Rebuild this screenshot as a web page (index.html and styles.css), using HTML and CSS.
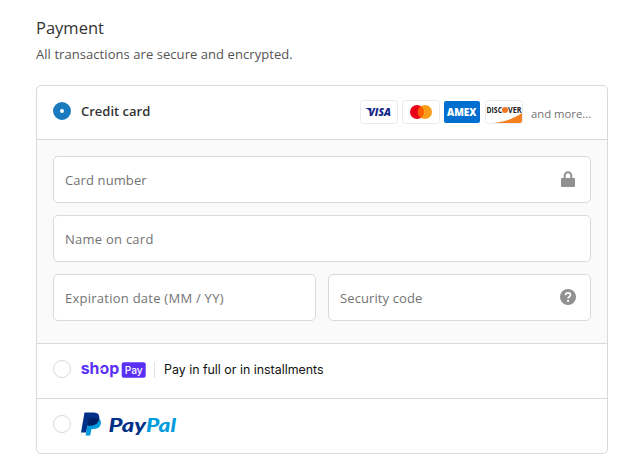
FILE: index.html
```html
<!DOCTYPE html>
<html lang="en">
<head>
<meta charset="utf-8">
<title>Payment</title>
<link rel="stylesheet" href="styles.css">
</head>
<body>
<main class="payment">
  <h2 class="title">Payment</h2>
  <p class="subtitle">All transactions are secure and encrypted.</p>
  <section class="methods">
    <div class="row row-card">
      <span class="radio radio-on"></span>
      <span class="label">Credit card</span>
      <div class="brands">
        <svg class="brand" viewBox="0 0 38 24"><rect x=".5" y=".5" width="37" height="23" rx="3" fill="#fff" stroke="#ebebeb"/><text x="8.500" y="16" textLength="22.500" lengthAdjust="spacingAndGlyphs" class="visa">VISA</text><path d="M5 8h4.600l1.900 5.500C10.300 11 8.400 9 5 8z" fill="#142688"/></svg>
        <svg class="brand" viewBox="0 0 38 24"><rect x=".5" y=".5" width="37" height="23" rx="3" fill="#fff" stroke="#ebebeb"/><circle cx="15" cy="12" r="7" fill="#eb001b"/><circle cx="23" cy="12" r="7" fill="#f79e1b"/><path d="M19 6.250a7 7 0 0 1 0 11.500 7 7 0 0 1 0-11.500z" fill="#ff5f00"/></svg>
        <svg class="brand" viewBox="0 0 38 24"><rect x="1" y="1" width="36" height="22" rx="2" fill="#006fcf"/><text x="4" y="15.700" textLength="29.500" lengthAdjust="spacingAndGlyphs" class="amex">AMEX</text></svg>
        <svg class="brand" viewBox="0 0 38 24"><rect x=".5" y=".5" width="37" height="23" rx="3" fill="#fff" stroke="#ebebeb"/><path d="M37 13v8a2 2 0 0 1-2 2H9c12-1.500 21-5 28-10z" fill="#f48120"/><text x="1.500" y="13" textLength="15.500" lengthAdjust="spacingAndGlyphs" class="discover">DISC</text><circle cx="20" cy="10" r="3" fill="#ee7623"/><text x="23" y="13" textLength="13.500" lengthAdjust="spacingAndGlyphs" class="discover">VER</text></svg>
      </div>
      <span class="more">and more...</span>
    </div>
    <div class="fields">
      <div class="field wide"><span class="ph">Card number</span>
        <svg class="icon" viewBox="0 0 16 16"><path d="M3.700 7V4.500a4.300 4.300 0 0 1 8.600 0V7H14a1 1 0 0 1 1 1v7a1 1 0 0 1-1 1H2a1 1 0 0 1-1-1V8a1 1 0 0 1 1-1zm2 0h4.600V4.500a2.300 2.300 0 0 0-4.600 0z" fill="#919191"/></svg>
      </div>
      <div class="field wide"><span class="ph spaced">Name on card</span></div>
      <div class="field"><span class="ph spaced">Expiration date (MM / YY)</span></div>
      <div class="field"><span class="ph">Security code</span>
        <svg class="icon" viewBox="0 0 16 16"><circle cx="8" cy="8" r="8" fill="#919191"/><path d="M5.500 6.200C5.500 4.500 6.600 3.800 8 3.800s2.500.8 2.500 2.100C10.500 7.700 8 7.700 8 9.600" fill="none" stroke="#fff" stroke-width="1.700"/><rect x="7.100" y="11" width="1.900" height="1.900" fill="#fff"/></svg>
      </div>
    </div>
    <div class="row row-shop">
      <span class="radio"></span>
      <svg class="shop" viewBox="0 0 65 20"><text x="-.3" y="15.300" textLength="38.500" lengthAdjust="spacingAndGlyphs" class="shop-word">shop</text><path d="M17.500 12l4-2.500" stroke="#fff" stroke-width="1.300"/><rect x="40.700" y="3.300" width="24" height="15.400" rx="2" fill="#5a31f4"/><text x="43.700" y="14.700" textLength="18" lengthAdjust="spacingAndGlyphs" class="shop-pay">Pay</text></svg>
      <span class="divider"></span>
      <span class="installments">Pay in full or in installments</span>
    </div>
    <div class="row row-paypal">
      <span class="radio"></span>
      <svg class="paypal" viewBox="0 0 96 26"><path d="M8 7h9.500c2.500 1.700 3 4 2 7-1.300 3-4 4-7.500 4h-1.500L9.200 24.500H4.500z" fill="#009cde"/><path d="M3.500 1.500H12c4.500 0 7 2 6.200 6-1 4.800-4 7-8.700 7H6.500L5 21.500H0z" fill="#003087"/><path d="M8.200 7H17.500l.8.500c-1 4.800-4 7-8.800 7h-3z" fill="#012169"/><text x="27.500" y="20.500" textLength="37.500" lengthAdjust="spacingAndGlyphs" class="pp dark">Pay</text><text x="65" y="20.500" textLength="30" lengthAdjust="spacingAndGlyphs" class="pp light">Pal</text></svg>
    </div>
  </section>
</main>
</body>
</html>
```
FILE: styles.css
```css
* { box-sizing: border-box; }
body { margin: 0; background: #fff; font-family: "Open Sans", "Noto Sans", sans-serif; color: #333; }
.payment { padding: 15px 34px 0 36px; }
.title { margin: 0; font-size: 16.5px; line-height: 26px; font-weight: 400; }
.subtitle { margin: 3px 0 0; font-size: 13px; line-height: 21px; color: #545454; white-space: nowrap; letter-spacing: 0.06px; }
.methods { margin-top: 20px; height: 369px; border: 1px solid #d9d9d9; border-radius: 5px; overflow: hidden; }
.row { display: flex; align-items: center; padding: 0 16px; }
.row-card { height: 53px; padding-bottom: 3px; }
.row-shop, .row-paypal { height: 55px; border-top: 1px solid #d9d9d9; padding-bottom: 4px; }
.radio { width: 18px; height: 18px; border: 1px solid #d9d9d9; border-radius: 50%; background: #fff; flex: none; }
.radio-on { border: 7px solid #197bbd; }
.label { margin-left: 10px; font-size: 13px; font-weight: 600; }
.brands { display: flex; gap: 3.7px; margin: 2px 0 0 auto; }
.brand { width: 38px; height: 24px; display: block; }
.more { width: 60px; margin: 5px 0 0 8px; font-size: 11.3px; color: #737373; white-space: nowrap; }
.visa { font: italic 800 11px "Open Sans", sans-serif; fill: #142688; }
.amex { font: 800 10px "Open Sans", sans-serif; fill: #fff; }
.discover { font: 700 8px "Open Sans", sans-serif; fill: #222; }
.fields { height: 204px; padding: 16px; display: grid; grid-template-columns: 1fr 1fr; gap: 12px; align-content: start; background: #fafafa; border-top: 1px solid #d9d9d9; }
.field { height: 47px; padding: 0 14px 0 11px; display: flex; align-items: center; justify-content: space-between; background: #fff; border: 1px solid #d9d9d9; border-radius: 5px; font-size: 13px; color: #737373; }
.wide { grid-column: span 2; }
.ph { white-space: nowrap; letter-spacing: 0.1px; }
.spaced { letter-spacing: 0.25px; }
.icon { width: 16px; height: 16px; display: block; margin-bottom: 1px; }
.shop { width: 65px; height: 20px; margin-left: 10px; overflow: visible; }
.shop-word { font: 700 16px Inter, sans-serif; fill: #5a31f4; }
.shop-pay { font: 500 11px Inter, sans-serif; fill: #fff; }
.divider { width: 1px; height: 16px; margin: 2px 0 0 8px; background: #e3e3e3; }
.installments { margin: 0 0 0 9px; font: 400 12.4px Inter, sans-serif; color: #111; white-space: nowrap; }
.paypal { width: 96px; height: 26px; margin-left: 10px; }
.pp { font: italic 900 19.5px Lato, "Open Sans", sans-serif; }
.dark { fill: #003087; }
.light { fill: #009cde; }
```
